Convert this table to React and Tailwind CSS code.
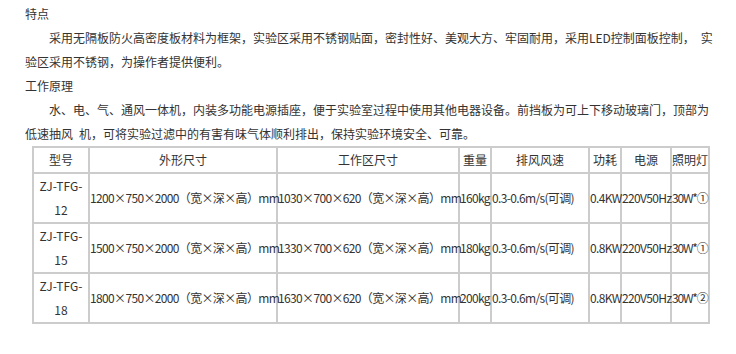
const rows = [
  { model: ['ZJ-TFG-', '12'], outer: '1200×750×2000（宽×深×高）mm', inner: '1030×700×620（宽×深×高）mm', weight: '160kg', power: '0.4KW', lamp: '30W*①' },
  { model: ['ZJ-TFG-', '15'], outer: '1500×750×2000（宽×深×高）mm', inner: '1330×700×620（宽×深×高）mm', weight: '180kg', power: '0.8KW', lamp: '30W*①' },
  { model: ['ZJ-TFG-', '18'], outer: '1800×750×2000（宽×深×高）mm', inner: '1630×700×620（宽×深×高）mm', weight: '200kg', power: '0.8KW', lamp: '30W*②' },
]

const headers = ['型号', '外形尺寸', '工作区尺寸', '重量', '排风风速', '功耗', '电源', '照明灯']
const widths = ['w-[56px]', 'w-[188px]', 'w-[182px]', 'w-[32px]', 'w-[98px]', 'w-[32px]', 'w-[50px]', 'w-[38px]']

const cell = 'border-l-2 border-t-2 border-[#cccccc] p-0 align-middle whitespace-nowrap overflow-visible'
const data = `${cell} tracking-[-0.65px]`

export default function App() {
  return (
    <div
      className="w-[736px] h-[354px] bg-white text-[#333333] text-[12px] leading-[24px] pl-[25px] pt-[2px]"
      style={{ fontFamily: '"Noto Sans CJK SC", "Noto Sans", sans-serif' }}
    >
      <p className="whitespace-nowrap">特点</p>
      <p className="whitespace-nowrap indent-[24px]">
        采用无隔板防火高密度板材料为框架，实验区采用不锈钢贴面，密封性好、美观大方、牢固耐用，采用LED控制面板控制，<span className="ml-[6px]">实</span>
      </p>
      <p className="whitespace-nowrap">验区采用不锈钢，为操作者提供便利。</p>
      <p className="whitespace-nowrap">工作原理</p>
      <p className="whitespace-nowrap indent-[24px]">
        水、电、气、通风一体机，内装多功能电源插座，便于实验室过程中使用其他电器设备。前挡板为可上下移动玻璃门，顶部为
      </p>
      <p className="whitespace-nowrap">
        低速抽风<span className="ml-[6px]">机</span>，可将实验过滤中的有害有味气体顺利排出，保持实验环境安全、可靠。
      </p>

      {/* 规格表 */}
      <table className="ml-[7px] table-fixed border-separate border-spacing-0 border-r-2 border-b-2 border-[#cccccc] w-[678px]">
        <colgroup>
          {widths.map((w, i) => (
            <col key={i} className={w} />
          ))}
        </colgroup>
        <thead>
          <tr>
            {headers.map(h => (
              <th key={h} className={`${cell} h-[26px] text-center font-normal`}>
                {h}
              </th>
            ))}
          </tr>
        </thead>
        <tbody>
          {rows.map(r => (
            <tr key={r.model[1]}>
              <td className={`${cell} h-[50px] text-center`}>
                {r.model[0]}
                <br />
                {r.model[1]}
              </td>
              <td className={data}>{r.outer}</td>
              <td className={data}>{r.inner}</td>
              <td className={data}>{r.weight}</td>
              <td className={data}>0.3-0.6m/s(可调)</td>
              <td className={data}>{r.power}</td>
              <td className={data}>220V50Hz</td>
              <td className={`${cell} tracking-[-1.2px]`}>{r.lamp}</td>
            </tr>
          ))}
        </tbody>
      </table>
    </div>
  )
}
